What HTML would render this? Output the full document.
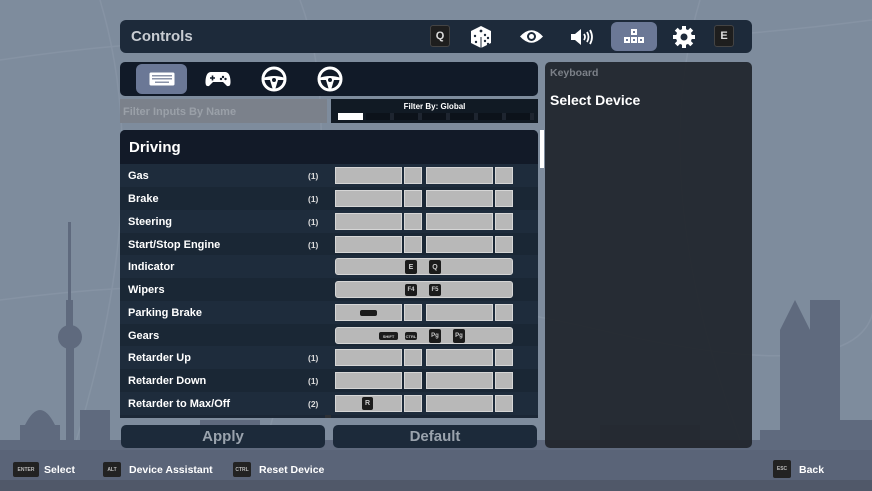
<!DOCTYPE html>
<html><head><meta charset="utf-8"><style>
*{margin:0;padding:0;box-sizing:border-box}
body{width:872px;height:491px;overflow:hidden;background:#7e8c9d;font-family:"Liberation Sans Narrow","Liberation Sans",sans-serif;font-weight:bold;color:#fff;position:relative}
.a{position:absolute}
.hdr{left:120px;top:20px;width:632px;height:33px;background:#1d2a3a;border-radius:6px}
.key{background:#1e1e1e;border:1px solid #444;border-radius:3px;color:#ddd;font-size:11px;width:20px;height:22px;display:flex;align-items:center;justify-content:center}
.dev{left:120px;top:62px;width:418px;height:34px;background:#111a28;border-radius:5px}
.list{left:120px;top:130px;width:418px;height:288px;background:#1b2736;border-radius:5px 5px 0 0;overflow:hidden}
.row{position:absolute;left:0;width:418px;height:23px}
.lbl{position:absolute;left:8px;top:6px;font-size:11px}
.cnt{position:absolute;left:188px;top:7px;font-size:8.5px;color:#ddd}
.b{position:absolute;top:3px;height:17px;background:#b8b8b8;border:1.5px solid #d6d6d6}
.s{position:absolute;top:3px;height:17px;width:18px;background:#b8b8b8;border:1.5px solid #d6d6d6}
.k{position:absolute;background:#1b1b1b;border-radius:2px;color:#ccc;font-size:6px;display:flex;align-items:center;justify-content:center}
.btn{top:425px;height:23px;background:#1c2a3a;border-radius:5px;color:#9aa3ad;font-size:15px;text-align:center;line-height:23px}
.ft{top:464px;font-size:10.5px;color:#fff}
.fk{top:462px;height:15px;background:#222;border-radius:2px;color:#bbb;font-size:5px;display:flex;align-items:center;justify-content:center}
</style></head><body>
<svg class="a" style="left:0;top:0" width="872" height="491">
<g stroke="#8c99a9" stroke-width="1.5" fill="none" opacity=".6">
<path d="M0 60 Q200 30 420 40 T872 20"/><path d="M100 0 Q160 200 60 491"/><path d="M300 0 Q360 160 250 491"/><path d="M700 0 Q640 200 760 491"/><path d="M0 300 Q300 260 600 330 T872 280"/>
</g>
<g fill="#5f6a7e">
<rect x="68" y="222" width="3" height="110"/><rect x="66" y="300" width="7" height="30"/><circle cx="70" cy="337" r="12"/><rect x="66" y="345" width="8" height="130"/>
<rect x="20" y="425" width="40" height="60"/><path d="M25 425 Q40 395 55 425Z"/><rect x="80" y="410" width="30" height="70"/><rect x="0" y="440" width="130" height="50"/>
<rect x="780" y="330" width="30" height="160"/><rect x="810" y="300" width="30" height="190"/><path d="M780 330 L795 300 L810 330Z"/>
<rect x="760" y="430" width="80" height="60"/><rect x="840" y="420" width="32" height="70"/>
<rect x="130" y="440" width="630" height="51"/><rect x="200" y="420" width="60" height="30"/><rect x="420" y="430" width="80" height="30"/><rect x="600" y="425" width="100" height="30"/>
</g>
<rect x="0" y="450" width="872" height="30" fill="#596276" opacity=".7"/>
<rect x="0" y="480" width="872" height="11" fill="#505869"/>
</svg>

<div class="a hdr">
<div class="a" style="left:11px;top:8px;font-size:15px;color:#c8ccd2">Controls</div>
<div class="a key" style="left:310px;top:5px">Q</div>
<svg class="a" style="left:350px;top:5px" width="22" height="24" viewBox="0 0 22 24"><path d="M11 1 L21 6 L21 18 L11 23 L1 18 L1 6Z" fill="#fff"/><circle cx="11" cy="6" r="1.4" fill="#1d2a3a"/><circle cx="5" cy="11" r="1.2" fill="#1d2a3a"/><circle cx="6" cy="17" r="1.2" fill="#1d2a3a"/><circle cx="15" cy="10" r="1.2" fill="#1d2a3a"/><circle cx="18" cy="13" r="1.2" fill="#1d2a3a"/><circle cx="15" cy="16" r="1.2" fill="#1d2a3a"/><circle cx="18" cy="19" r="1.2" fill="#1d2a3a"/><path d="M11 12 V23" stroke="#1d2a3a"/></svg>
<svg class="a" style="left:399px;top:9px" width="25" height="15" viewBox="0 0 25 15"><path d="M1 7.5 Q12.5 -5 24 7.5 Q12.5 20 1 7.5Z" fill="#fff"/><circle cx="12.5" cy="7.5" r="4.5" fill="#1d2a3a"/><circle cx="12.5" cy="7.5" r="2.5" fill="#fff"/></svg>
<svg class="a" style="left:450px;top:8px" width="24" height="18" viewBox="0 0 24 18"><path d="M1 6 H5 L11 1 V17 L5 12 H1Z" fill="#fff"/><path d="M14 6 Q16 9 14 12 M17 4 Q20 9 17 14 M20 2 Q24 9 20 16" stroke="#fff" stroke-width="1.8" fill="none"/></svg>
<div class="a" style="left:491px;top:2px;width:46px;height:29px;background:#6b7896;border-radius:6px"></div>
<svg class="a" style="left:503px;top:8px" width="22" height="17" viewBox="0 0 22 17"><rect x="8" y="1" width="6" height="6" fill="#fff"/><rect x="1" y="9" width="6" height="6" fill="#fff"/><rect x="8" y="9" width="6" height="6" fill="#fff"/><rect x="15" y="9" width="6" height="6" fill="#fff"/><g fill="#6b7896"><rect x="10" y="3" width="2" height="2"/><rect x="3" y="11" width="2" height="2"/><rect x="10" y="11" width="2" height="2"/><rect x="17" y="11" width="2" height="2"/></g></svg>
<svg class="a" style="left:552px;top:5px" width="24" height="24" viewBox="0 0 24 24"><g fill="#fff"><circle cx="12" cy="12" r="8"/><rect x="10" y="1" width="4" height="22"/><rect x="10" y="1" width="4" height="22" transform="rotate(45 12 12)"/><rect x="10" y="1" width="4" height="22" transform="rotate(90 12 12)"/><rect x="10" y="1" width="4" height="22" transform="rotate(135 12 12)"/></g><circle cx="12" cy="12" r="3.5" fill="#1d2a3a"/></svg>
<div class="a key" style="left:594px;top:5px">E</div>
</div>

<div class="a dev">
<div class="a" style="left:16px;top:2px;width:51px;height:30px;background:#6b7896;border-radius:6px"></div>
<svg class="a" style="left:29px;top:10px" width="26" height="14" viewBox="0 0 26 14"><rect x="0.5" y="0.5" width="25" height="13" rx="1.5" fill="#fff"/><g fill="#8a93a8"><rect x="3" y="3" width="20" height="1.5"/><rect x="3" y="6" width="20" height="1.5"/><rect x="6" y="9.5" width="14" height="1.5"/></g></svg>
<svg class="a" style="left:85px;top:9px" width="26" height="16" viewBox="0 0 26 16"><path d="M6 1 H20 Q25 1 25.5 10 Q26 16 22 15 L18 11 H8 L4 15 Q0 16 0.5 10 Q1 1 6 1Z" fill="#fff"/><path d="M5 7 H10 M7.5 4.5 V9.5" stroke="#111a28" stroke-width="1.6"/><circle cx="18" cy="6" r="1.2" fill="#111a28"/><circle cx="20.5" cy="8" r="1.2" fill="#111a28"/><circle cx="16" cy="8" r="1.2" fill="#111a28"/></svg>
<svg class="a" style="left:141px;top:4px" width="26" height="26" viewBox="0 0 26 26"><circle cx="13" cy="13" r="11" stroke="#fff" stroke-width="3" fill="none"/><path d="M2 12 Q13 8 24 12 L24 14 L17 14 L14 24 L12 24 L9 14 L2 14Z" fill="#fff"/><circle cx="13" cy="14" r="2" fill="#111a28"/></svg>
<svg class="a" style="left:197px;top:4px" width="26" height="26" viewBox="0 0 26 26"><circle cx="13" cy="13" r="11" stroke="#fff" stroke-width="3" fill="none"/><path d="M2 12 Q13 8 24 12 L24 14 L17 14 L14 24 L12 24 L9 14 L2 14Z" fill="#fff"/><circle cx="13" cy="14" r="2" fill="#111a28"/></svg>
</div>

<div class="a" style="left:120px;top:99px;width:207px;height:24px;background:#7b818b"></div>
<div class="a" style="left:123px;top:106px;font-size:11px;color:#9aa0a8">Filter Inputs By Name</div>
<div class="a" style="left:331px;top:99px;width:207px;height:24px;background:#111a24"></div>
<div class="a" style="left:331px;top:102px;width:207px;text-align:center;font-size:8px">Filter By: Global</div>
<div class="a" style="left:338px;top:113px;width:25px;height:7px;background:#fff"></div>
<div class="a" style="left:366px;top:113px;width:168px;height:7px;background:repeating-linear-gradient(90deg,#0c121a 0 24px,#1e2530 24px 28px)"></div>

<div class="a list">
<div class="a" style="left:0;top:0;width:418px;height:34px;background:#121a28"></div>
<div class="a" style="left:9px;top:9px;font-size:15px">Driving</div>
<div class="a" style="left:205px;top:34px;width:6px;height:260px;background:#2d3035"></div>

<div class="row" style="top:34px;background:#1e2c3c"><div class="lbl">Gas</div><div class="cnt">(1)</div><div class="b" style="left:215px;width:67px"></div><div class="s" style="left:284px"></div><div class="b" style="left:306px;width:67px"></div><div class="s" style="left:375px"></div></div>
<div class="row" style="top:57px;background:#1a2735"><div class="lbl">Brake</div><div class="cnt">(1)</div><div class="b" style="left:215px;width:67px"></div><div class="s" style="left:284px"></div><div class="b" style="left:306px;width:67px"></div><div class="s" style="left:375px"></div></div>
<div class="row" style="top:80px;background:#1e2c3c"><div class="lbl">Steering</div><div class="cnt">(1)</div><div class="b" style="left:215px;width:67px"></div><div class="s" style="left:284px"></div><div class="b" style="left:306px;width:67px"></div><div class="s" style="left:375px"></div></div>
<div class="row" style="top:103px;background:#1a2735"><div class="lbl">Start/Stop Engine</div><div class="cnt">(1)</div><div class="b" style="left:215px;width:67px"></div><div class="s" style="left:284px"></div><div class="b" style="left:306px;width:67px"></div><div class="s" style="left:375px"></div></div>
<div class="row" style="top:125px;background:#1e2c3c"><div class="lbl">Indicator</div><div class="b" style="left:215px;width:178px;border-radius:3px"></div><div class="k" style="left:285px;top:5px;width:12px;height:14px;font-size:7px">E</div><div class="k" style="left:309px;top:5px;width:12px;height:14px;font-size:7px">Q</div></div>
<div class="row" style="top:148px;background:#1a2735"><div class="lbl">Wipers</div><div class="b" style="left:215px;width:178px;border-radius:3px"></div><div class="k" style="left:285px;top:6px;width:12px;height:12px">F4</div><div class="k" style="left:309px;top:6px;width:12px;height:12px">F5</div></div>
<div class="row" style="top:171px;background:#1e2c3c"><div class="lbl">Parking Brake</div><div class="b" style="left:215px;width:67px"></div><div class="k" style="left:240px;top:9px;width:17px;height:6px"></div><div class="s" style="left:284px"></div><div class="b" style="left:306px;width:67px"></div><div class="s" style="left:375px"></div></div>
<div class="row" style="top:194px;background:#1a2735"><div class="lbl">Gears</div><div class="b" style="left:215px;width:178px;border-radius:3px"></div><div class="k" style="left:259px;top:8px;width:19px;height:8px;font-size:4px">SHIFT</div><div class="k" style="left:285px;top:8px;width:12px;height:8px;font-size:4px">CTRL</div><div class="k" style="left:309px;top:5px;width:12px;height:14px">Pg</div><div class="k" style="left:333px;top:5px;width:12px;height:14px">Pg</div></div>
<div class="row" style="top:216px;background:#1e2c3c"><div class="lbl">Retarder Up</div><div class="cnt">(1)</div><div class="b" style="left:215px;width:67px"></div><div class="s" style="left:284px"></div><div class="b" style="left:306px;width:67px"></div><div class="s" style="left:375px"></div></div>
<div class="row" style="top:239px;background:#1a2735"><div class="lbl">Retarder Down</div><div class="cnt">(1)</div><div class="b" style="left:215px;width:67px"></div><div class="s" style="left:284px"></div><div class="b" style="left:306px;width:67px"></div><div class="s" style="left:375px"></div></div>
<div class="row" style="top:262px;background:#1e2c3c"><div class="lbl">Retarder to Max/Off</div><div class="cnt">(2)</div><div class="b" style="left:215px;width:67px"></div><div class="k" style="left:242px;top:5px;width:11px;height:13px;font-size:7px">R</div><div class="s" style="left:284px"></div><div class="b" style="left:306px;width:67px"></div><div class="s" style="left:375px"></div></div>
</div>
<div class="a" style="left:540px;top:130px;width:4px;height:38px;background:#fff"></div>

<div class="a" style="left:545px;top:62px;width:207px;height:386px;background:#22272e;border-radius:5px;opacity:.95"></div>
<div class="a" style="left:550px;top:67px;font-size:10.5px;color:#7b8088">Keyboard</div>
<div class="a" style="left:550px;top:92px;font-size:14px">Select Device</div>

<div class="a btn" style="left:121px;width:204px">Apply</div>
<div class="a btn" style="left:333px;width:204px">Default</div>

<div class="a fk" style="left:13px;width:26px">ENTER</div><div class="a ft" style="left:44px">Select</div>
<div class="a fk" style="left:103px;width:18px">ALT</div><div class="a ft" style="left:129px">Device Assistant</div>
<div class="a fk" style="left:233px;width:18px">CTRL</div><div class="a ft" style="left:259px">Reset Device</div>
<div class="a fk" style="left:773px;width:18px;height:18px;top:460px">ESC</div><div class="a ft" style="left:799px">Back</div>
</body></html>
